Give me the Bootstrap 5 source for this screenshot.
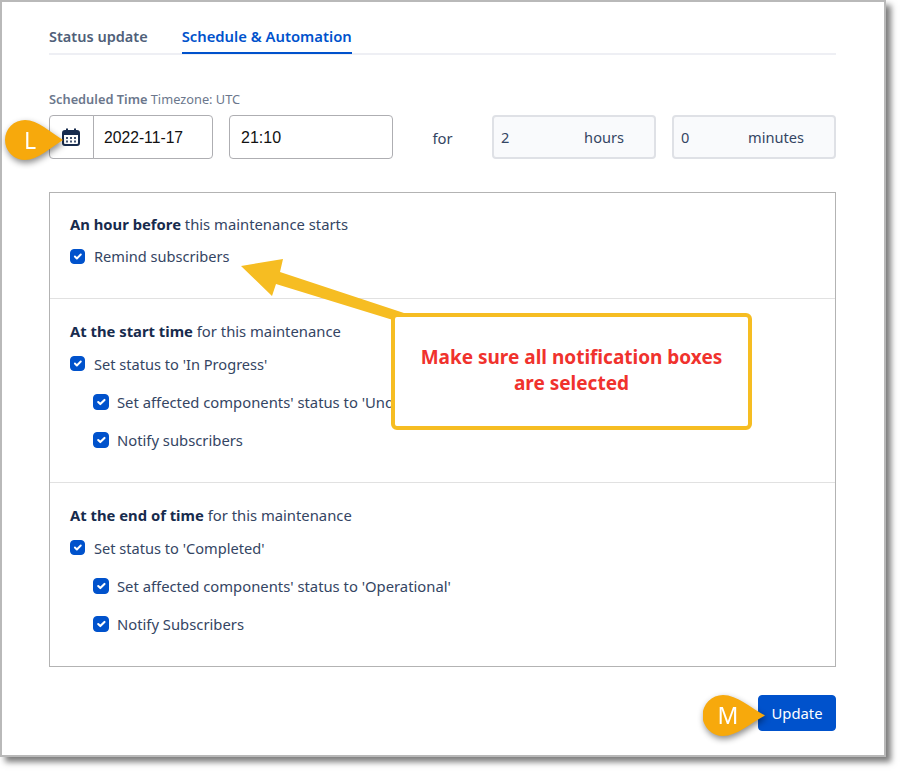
<!DOCTYPE html>
<html lang="en">
<head>
    <meta charset="UTF-8">
    <meta name="viewport" content="width=device-width, initial-scale=1">
    <title>Schedule &amp; Automation</title>
    <link href="https://cdn.jsdelivr.net/npm/bootstrap@5.3.0/dist/css/bootstrap.min.css" rel="stylesheet">
    <script src="https://cdn.jsdelivr.net/npm/bootstrap@5.3.0/dist/js/bootstrap.bundle.min.js"></script>
    <style>
        body {
            background: #fff;
            font-family: "Noto Sans", sans-serif;
            font-size: 14.8px;
            color: #344563;
            height: 772px;
            overflow: hidden;
            position: relative;
        }
        .shot-frame {
            width: 886px;
            height: 757px;
            border: 2px solid #b9b9b9;
            box-shadow: 5px 5px 6px #7d7d7d;
            padding: 0 48px 0 47px;
            background: #fff;
        }
        .tab-row {
            height: 53px;
            border-bottom: 2px solid #eeeff4;
            gap: 34px;
            padding-top: 24px;
        }
        .tab-link {
            display: block;
            height: 28px;
            color: #505f79;
            font-weight: 600;
            font-size: 14.5px;
            line-height: 20px;
            text-decoration: none;
        }
        .tab-link.on {
            color: #0052cc;
            font-size: 14.8px;
            border-bottom: 2px solid #0052cc;
        }
        .time-label {
            margin-top: 34px;
            height: 20px;
            font-size: 12.8px;
            line-height: 20px;
            color: #6b778c;
        }
        .time-label b { font-weight: 600; }
        .time-row { gap: 16px; margin-top: 6px; }
        .time-row > * { flex: none; }
        .date-group { width: 164px; }
        .date-group .input-group-text {
            width: 45px;
            background: #fff;
            padding: 0 0 0 12px;
        }
        .date-group .input-group-text,
        .time-input {
            border-color: #aeaeb2;
            border-radius: 4px;
        }
        .time-input {
            height: 44px;
            font-family: "Liberation Sans", sans-serif;
            font-size: 16px;
            color: #111;
            padding: 1px 11px 0;
        }
        .date-group .time-input { padding-left: 10px; font-size: 15.7px; }
        .time-only { width: 164px; }
        .for-word { width: 67px; text-align: center; padding-top: 2px; }
        .span-box {
            width: 164px;
            height: 44px;
            border: 2px solid #dfe1e6;
            border-radius: 4px;
            background: #f9fafc;
            font-size: 14.6px;
            padding: 2px 30px 0 7px;
        }
        .rule-box {
            margin-top: 33px;
            height: 475px;
            border: 1px solid #b3b3b3;
        }
        .rule-part { padding: 20px 20px 0; }
        .rule-part + .rule-part { border-top: 1px solid #e1e1e1; padding-top: 21px; }
        .part-one { height: 105px; }
        .part-one .rule-title { margin-bottom: 10px; }
        .part-two { height: 184px; }
        .rule-title { line-height: 22px; margin-bottom: 11px; }
        .rule-title b { color: #172b4d; font-weight: 700; }
        .form-check {
            min-height: 22px;
            line-height: 22px;
            margin-bottom: 0;
            padding-left: 24px;
        }
        .form-check-label { font-size: 14.6px; }
        .form-check .form-check-input {
            width: 15px;
            height: 15px;
            margin-left: -24px;
            margin-top: 3px;
            border-radius: 4px;
            opacity: 1;
        }
        .part-one .form-check .form-check-input { margin-top: 4px; }
        .form-check-input:checked { background-color: #0052cc; border-color: #0052cc; }
        .sub-check { margin-left: 23px; margin-top: 16px; }
        .sub-check .form-check-label { font-size: 14.8px; }
        .sub-check .form-check-input { width: 16px; height: 16px; }
        .foot-row { margin-top: 28px; }
        .save-btn {
            width: 78px;
            height: 36px;
            padding: 0;
            background: #0052cc;
            border-color: #0052cc;
            border-radius: 4px;
            font-size: 14.8px;
        }
        .note-box {
            position: absolute;
            left: 391px;
            top: 313px;
            width: 361px;
            height: 117px;
            border: 4px solid #f6bd22;
            border-radius: 6px;
            background: #fff;
            color: #f0322d;
            font-family: "Noto Sans", sans-serif;
            font-weight: 700;
            font-size: 19px;
            line-height: 26px;
            text-align: center;
            padding: 0 20px 3px;
        }
        .note-arrow { position: absolute; left: 0; top: 0; pointer-events: none; }
        .pin-mark {
            position: absolute;
            color: #fff;
            font-size: 23px;
            filter: drop-shadow(1px 3px 3px rgba(0, 0, 0, .45));
        }
        .pin-mark svg { display: block; }
        .pin-mark span {
            position: absolute;
            left: 0;
            top: 0;
            width: 50px;
            line-height: 40px;
            text-align: center;
        }
        .pin-l { left: 5px; top: 120px; }
        .pin-m { left: 703px; top: 695px; }
    </style>
</head>
<body>
    <div class="shot-frame">
        <div class="tab-row d-flex">
            <a class="tab-link" href="#">Status update</a>
            <a class="tab-link on" href="#">Schedule &amp; Automation</a>
        </div>

        <div class="time-label"><b>Scheduled Time</b> Timezone: UTC</div>
        <div class="time-row d-flex align-items-center">
            <div class="input-group date-group flex-nowrap">
                <span class="input-group-text">
                    <svg width="18" height="18" viewBox="0 0 18 18">
                        <rect x="1" y="3" width="16" height="14" rx="2" fill="#fff" stroke="#172b4d" stroke-width="2"/>
                        <rect x="1" y="3" width="16" height="4" fill="#172b4d"/>
                        <rect x="4" y="0.5" width="2" height="4" fill="#172b4d"/>
                        <rect x="12" y="0.5" width="2" height="4" fill="#172b4d"/>
                        <g fill="#42526e">
                            <rect x="4" y="9" width="2" height="2"/><rect x="8" y="9" width="2" height="2"/><rect x="12" y="9" width="2" height="2"/>
                            <rect x="4" y="12.5" width="2" height="2"/><rect x="8" y="12.5" width="2" height="2"/><rect x="12" y="12.5" width="2" height="2"/>
                        </g>
                    </svg>
                </span>
                <input class="form-control time-input" type="text" value="2022-11-17">
            </div>
            <input class="form-control time-input time-only" type="text" value="21:10">
            <div class="for-word">for</div>
            <div class="span-box d-flex align-items-center justify-content-between"><span>2</span><span>hours</span></div>
            <div class="span-box d-flex align-items-center justify-content-between"><span>0</span><span>minutes</span></div>
        </div>

        <div class="rule-box">
            <div class="rule-part part-one">
                <div class="rule-title"><b>An hour before</b> this maintenance starts</div>
                <div class="form-check">
                    <input class="form-check-input" type="checkbox" checked>
                    <label class="form-check-label">Remind subscribers</label>
                </div>
            </div>
            <div class="rule-part part-two">
                <div class="rule-title"><b>At the start time</b> for this maintenance</div>
                <div class="form-check">
                    <input class="form-check-input" type="checkbox" checked>
                    <label class="form-check-label">Set status to 'In Progress'</label>
                </div>
                <div class="form-check sub-check">
                    <input class="form-check-input" type="checkbox" checked>
                    <label class="form-check-label">Set affected components' status to 'Under Maintenance'</label>
                </div>
                <div class="form-check sub-check">
                    <input class="form-check-input" type="checkbox" checked>
                    <label class="form-check-label">Notify subscribers</label>
                </div>
            </div>
            <div class="rule-part">
                <div class="rule-title"><b>At the end of time</b> for this maintenance</div>
                <div class="form-check">
                    <input class="form-check-input" type="checkbox" checked>
                    <label class="form-check-label">Set status to 'Completed'</label>
                </div>
                <div class="form-check sub-check">
                    <input class="form-check-input" type="checkbox" checked>
                    <label class="form-check-label">Set affected components' status to 'Operational'</label>
                </div>
                <div class="form-check sub-check">
                    <input class="form-check-input" type="checkbox" checked>
                    <label class="form-check-label">Notify Subscribers</label>
                </div>
            </div>
        </div>

        <div class="foot-row d-flex justify-content-end">
            <button class="btn btn-primary save-btn" type="button">Update</button>
        </div>
    </div>

    <!-- annotations laid over the screenshot -->
    <svg class="note-arrow" width="900" height="772">
        <polygon points="241,266 283,259 280,272 407,314 393,320 276,284 272,296" fill="#f6bd22"/>
    </svg>
    <div class="note-box d-flex align-items-center justify-content-center">Make sure all notification boxes are selected</div>

    <div class="pin-mark pin-l">
        <svg width="58" height="40" viewBox="0 0 58 40"><path d="M20 0C33 0 45 12 58 20C45 28 33 40 20 40A20 20 0 0 1 20 0Z" fill="#f7a90c"/></svg>
        <span>L</span>
    </div>
    <div class="pin-mark pin-m">
        <svg width="62" height="41" viewBox="0 0 62 41"><path d="M20 0C34 0 48 13 62 20.5C48 28 34 41 20 41A20.5 20.5 0 0 1 20 0Z" fill="#f7a90c"/></svg>
        <span>M</span>
    </div>
</body>
</html>
